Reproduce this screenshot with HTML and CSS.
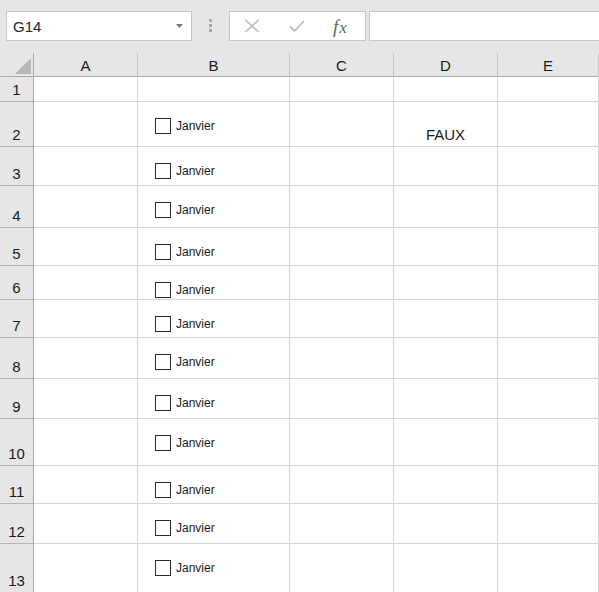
FILE: index.html
```html
<!DOCTYPE html>
<html lang="fr">
<head>
<meta charset="utf-8">
<title>Feuille</title>
<link rel="stylesheet" href="styles.css">
</head>
<body>
<div class="toolbar">
  <div class="namebox">
    <span class="name">G14</span>
    <svg class="caret" width="7" height="4" viewBox="0 0 7 4"><polygon points="0,0 7,0 3.5,4" fill="#7a7a7a"/></svg>
  </div>
  <div class="grip"><i></i><i></i><i></i></div>
  <div class="fxbtns">
    <svg class="btn-x" width="16" height="14" viewBox="0 0 16 14"><path d="M1.5 1 L14.5 13 M14.5 1 L1.5 13" stroke="#bdbdbd" stroke-width="1.6" fill="none"/></svg>
    <svg class="btn-ok" width="16" height="14" viewBox="0 0 16 14"><path d="M1 7.5 L5.5 12 L15 2" stroke="#bdbdbd" stroke-width="1.8" fill="none"/></svg>
    <span class="fx">f<span class="fx-x">x</span></span>
  </div>
  <div class="formula"></div>
</div>

<div class="sheet">
  <div class="corner"><svg width="16" height="16" viewBox="0 0 16 16"><polygon points="16,0 16,16 0,16" fill="#b7b7b7"/></svg></div>
  <div class="ch">A</div><div class="ch">B</div><div class="ch">C</div><div class="ch">D</div><div class="ch">E</div>

  <div class="rh">1</div><div class="c"></div><div class="c"></div><div class="c"></div><div class="c"></div><div class="c"></div>

  <div class="rh">2</div><div class="c"></div>
  <div class="c cb"><span class="box"></span><span class="lbl">Janvier</span></div>
  <div class="c"></div><div class="c val">FAUX</div><div class="c"></div>

  <div class="rh">3</div><div class="c"></div>
  <div class="c cb"><span class="box"></span><span class="lbl">Janvier</span></div>
  <div class="c"></div><div class="c"></div><div class="c"></div>

  <div class="rh">4</div><div class="c"></div>
  <div class="c cb"><span class="box"></span><span class="lbl">Janvier</span></div>
  <div class="c"></div><div class="c"></div><div class="c"></div>

  <div class="rh">5</div><div class="c"></div>
  <div class="c cb"><span class="box"></span><span class="lbl">Janvier</span></div>
  <div class="c"></div><div class="c"></div><div class="c"></div>

  <div class="rh">6</div><div class="c"></div>
  <div class="c cb"><span class="box"></span><span class="lbl">Janvier</span></div>
  <div class="c"></div><div class="c"></div><div class="c"></div>

  <div class="rh">7</div><div class="c"></div>
  <div class="c cb"><span class="box"></span><span class="lbl">Janvier</span></div>
  <div class="c"></div><div class="c"></div><div class="c"></div>

  <div class="rh">8</div><div class="c"></div>
  <div class="c cb"><span class="box"></span><span class="lbl">Janvier</span></div>
  <div class="c"></div><div class="c"></div><div class="c"></div>

  <div class="rh">9</div><div class="c"></div>
  <div class="c cb"><span class="box"></span><span class="lbl">Janvier</span></div>
  <div class="c"></div><div class="c"></div><div class="c"></div>

  <div class="rh">10</div><div class="c"></div>
  <div class="c cb"><span class="box"></span><span class="lbl">Janvier</span></div>
  <div class="c"></div><div class="c"></div><div class="c"></div>

  <div class="rh">11</div><div class="c"></div>
  <div class="c cb"><span class="box"></span><span class="lbl">Janvier</span></div>
  <div class="c"></div><div class="c"></div><div class="c"></div>

  <div class="rh">12</div><div class="c"></div>
  <div class="c cb"><span class="box"></span><span class="lbl">Janvier</span></div>
  <div class="c"></div><div class="c"></div><div class="c"></div>

  <div class="rh">13</div><div class="c"></div>
  <div class="c cb"><span class="box"></span><span class="lbl">Janvier</span></div>
  <div class="c"></div><div class="c"></div><div class="c"></div>
</div>
</body>
</html>
```
FILE: styles.css
```css
* { box-sizing: border-box; }
html, body {
  margin: 0;
  padding: 0;
  background: #ffffff;
  overflow: hidden;
}
body {
  width: 599px;
  height: 592px;
  font-family: "Liberation Sans", Arial, sans-serif;
  color: #1a1a1a;
}

/* ---------- formula toolbar ---------- */
.toolbar {
  display: flex;
  align-items: flex-start;
  height: 53px;
  padding: 11px 0 0 6px;
  background: #e6e6e6;
}
.namebox {
  width: 186px;
  height: 30px;
  background: #fff;
  border: 1px solid #c6c6c6;
  display: flex;
  align-items: center;
  padding: 0 8px 0 6px;
}
.name {
  flex: 1;
  font-size: 15px;
  color: #262626;
}
.caret { display: block; }
.grip {
  margin: 8px 0 0 17px;
  width: 3px;
  display: flex;
  flex-direction: column;
  gap: 2px;
}
.grip i {
  display: block;
  width: 3px;
  height: 3px;
  background: #a8a8a8;
}
.fxbtns {
  margin-left: 17px;
  width: 137px;
  height: 30px;
  background: #fff;
  border: 1px solid #c6c6c6;
  display: flex;
  align-items: center;
  padding-left: 14px;
}
.btn-x { display: block; }
.btn-ok { display: block; margin-left: 29px; }
.fx {
  margin-left: 28px;
  font-family: "Liberation Serif", "Times New Roman", serif;
  font-style: italic;
  font-size: 19px;
  color: #666666;
  line-height: 1;
}
.fx-x { margin-left: 1px; font-size: 17px; }
.formula {
  flex: 1;
  margin-left: 3px;
  margin-right: -2px;
  height: 30px;
  background: #fff;
  border: 1px solid #c6c6c6;
}

/* ---------- sheet grid ---------- */
.sheet {
  display: grid;
  grid-template-columns: 34px 104px 152px 104px 104px 1fr;
  grid-template-rows: 24px 25px 45px 39px 42px 38px 34px 38px 41px 40px 47px 38px 40px 49px;
}
.corner {
  background: #e6e6e6;
  border-right: 1px solid #ababab;
  border-bottom: 1px solid #ababab;
  display: flex;
  justify-content: flex-end;
  align-items: flex-end;
  padding: 0 2px 2px 0;
}
.corner svg { display: block; }
.ch {
  background: #e6e6e6;
  border-right: 1px solid #c4c4c4;
  border-bottom: 1px solid #ababab;
  text-align: center;
  font-size: 15px;
  line-height: 23px;
  padding-top: 1px;
  color: #1a1a1a;
}
.rh {
  background: #e6e6e6;
  border-right: 1px solid #ababab;
  border-bottom: 1px solid #b4b4b4;
  display: flex;
  justify-content: center;
  align-items: flex-end;
  font-size: 15px;
  line-height: 15px;
  padding-bottom: 4px;
  color: #1a1a1a;
}
.c {
  border-right: 1px solid #d6d6d6;
  border-bottom: 1px solid #d6d6d6;
}
.val {
  display: flex;
  justify-content: center;
  align-items: flex-end;
  font-size: 15px;
  line-height: 15px;
  padding-bottom: 4px;
  color: #1a1a1a;
}
.cb {
  display: flex;
  align-items: flex-start;
  padding: 16px 0 0 17px;
}
.box {
  display: block;
  width: 16px;
  height: 16px;
  border: 1px solid #2a2a2a;
  background: #fff;
  flex: none;
}
.lbl {
  margin-left: 5px;
  font-size: 12px;
  line-height: 16px;
  color: #1a1a1a;
}
```
